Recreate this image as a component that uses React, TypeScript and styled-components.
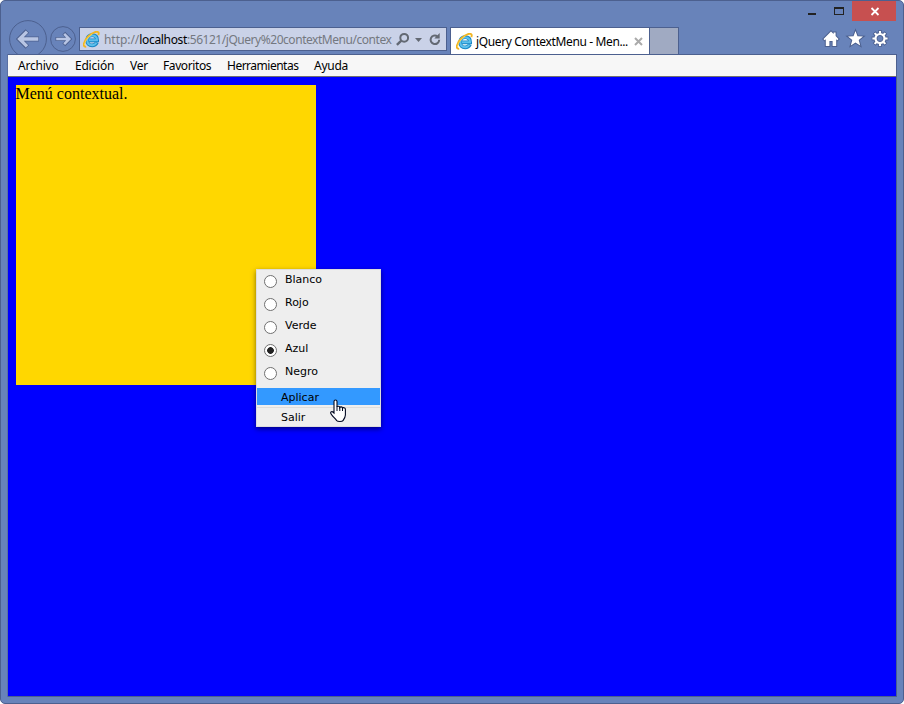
import React from 'react';
import styled, { createGlobalStyle } from 'styled-components';

const GlobalStyle = createGlobalStyle`
  * { box-sizing: border-box; }
  body { margin: 0; background: #fff; }
`;

const Window = styled.div`
  width: 904px;
  height: 704px;
  display: flex;
  flex-direction: column;
  padding: 0 7px 6px;
  border: 1px solid #4c608f;
  border-radius: 5px;
  background: #6883ba;
  overflow: hidden;
  font-family: 'Noto Sans', 'Open Sans', sans-serif;
  font-size: 12px;
  color: #000;
`;

const Caption = styled.div`
  height: 20px;
  flex: none;
  display: flex;
  justify-content: flex-end;
`;

const CaptionButton = styled.div<{ $w: number; $close?: boolean }>`
  width: ${(p) => p.$w}px;
  height: 20px;
  background: ${(p) => (p.$close ? '#c75050' : 'transparent')};
  svg { display: block; }
`;

const NavRow = styled.div`
  height: 33px;
  flex: none;
  display: flex;
  align-items: flex-start;
`;

const HistoryButtons = styled.svg`
  width: 71px;
  height: 33px;
  flex: none;
`;

const AddressBar = styled.div`
  width: 368px;
  height: 24px;
  margin-top: 6px;
  padding-left: 3px;
  display: flex;
  align-items: center;
  flex: none;
  border: 1px solid #4c608f;
  background: #cad2e8;
`;

const Url = styled.div`
  width: 288px;
  margin: 1px 0 0 4px;
  white-space: nowrap;
  color: #747880;
  letter-spacing: -0.05px;
  line-height: 20px;
`;

const Host = styled.span`
  color: #000;
  letter-spacing: -0.33px;
`;

const Path = styled.span`
  letter-spacing: -0.46px;
`;

const AddressIcons = styled.svg`
  width: 54px;
  height: 22px;
  flex: none;
`;

const Tab = styled.div`
  width: 200px;
  height: 27px;
  margin: 6px 0 0 3px;
  padding-left: 5px;
  display: flex;
  align-items: center;
  flex: none;
  border: 1px solid #4c608f;
  border-bottom: 0;
  background: #fff;
`;

const TabTitle = styled.div`
  width: 158px;
  margin: 1px 0 0 3px;
  white-space: nowrap;
  letter-spacing: -0.37px;
`;

const NewTab = styled.div`
  width: 29px;
  height: 27px;
  margin-top: 6px;
  border: 1px solid #4c608f;
  border-width: 1px 1px 0 0;
  background: #a0aac2;
`;

const Tools = styled.svg`
  width: 76px;
  height: 33px;
  margin-left: auto;
`;

const Client = styled.div`
  flex: 1;
  display: flex;
  flex-direction: column;
  border: 1px solid #4c608f;
  border-width: 1px 1px 1px 0;
  margin-right: -1px;
  box-shadow: -1px 0 0 #5a70a4;
`;

const MenuBar = styled.div`
  height: 22px;
  flex: none;
  display: flex;
  border-bottom: 1px solid #707070;
  padding-left: 10px;
  background: #f7f7f7;
  line-height: 22px;
`;

const MenuBarItem = styled.div<{ $w: number; $ls: number }>`
  width: ${(p) => p.$w}px;
  letter-spacing: ${(p) => p.$ls}px;
  white-space: nowrap;
`;

const Page = styled.div`
  position: relative;
  flex: 1;
  padding: 8px;
  background: #0000ff;
`;

const Target = styled.div`
  width: 300px;
  height: 300px;
  background: #ffd700;
  font: 16px/18px 'Liberation Serif', serif;
  text-indent: -0.5px;
`;

const ContextMenu = styled.div`
  position: absolute;
  left: 248px;
  top: 192px;
  width: 125px;
  height: 158px;
  border: 1px solid #ddd;
  background: #eee;
  box-shadow: 0 2px 5px rgba(0, 0, 0, 0.5);
  font: 11px/18px 'DejaVu Sans', sans-serif;
`;

const Option = styled.div`
  height: 23px;
  display: flex;
  padding-left: 7px;
  gap: 7px;
  line-height: 20px;
`;

const Radio = styled.div<{ $on?: boolean }>`
  width: 13px;
  height: 13px;
  margin-top: 5px;
  border: 1px solid #707070;
  border-radius: 50%;
  background: ${(p) => (p.$on ? 'radial-gradient(circle, #222 0 3px, #fff 3.7px)' : '#fff')};
`;

const Label = styled.span`
  margin-left: 1px;
  letter-spacing: -0.02px;
`;

const Command = styled.div<{ $active?: boolean }>`
  height: ${(p) => (p.$active ? 17 : 20)}px;
  margin-top: ${(p) => (p.$active ? 3 : 2)}px;
  padding-left: 24px;
  border-top: ${(p) => (p.$active ? '0' : '1px solid #ddd')};
  background: ${(p) => (p.$active ? '#3399ff' : 'transparent')};
  line-height: 19px;
`;

const Cursor = styled.svg`
  position: absolute;
  left: 72px;
  top: 129px;
  width: 18px;
  height: 24px;
`;

const IeLogo = () => (
  <svg width="17" height="17" viewBox="0 0 17 17" fill="none">
    <path d="M14 11.4C12.9 13.6 11.2 14.4 9.2 14.4 5.9 14.4 4 12.2 4 9.3S6.1 4.1 9.2 4.1s5 2 5 5.3H5.5" stroke="#1a86c4" strokeWidth="3.6" />
    <path d="M13.5 11.6c-.9 1.7-2.4 2.6-4.2 2.6-3 0-5-2-5-4.9s2-4.9 5-4.9 4.7 2 4.7 4.9H6" stroke="#5cc0ec" strokeWidth="2" />
    <path d="M3.2 15.6C-.9 16.5.6 10 5.4 5.3 9.6 1.1 15.2-.6 15.7 2c.1.7-.1 1.4-.4 2.1" stroke="#f2b522" strokeWidth="1.9" />
    <path d="M1.6 14C1.5 10.8 5 5.9 9.3 3" stroke="#ffdf60" strokeWidth=".7" />
  </svg>
);

const menus = [
  { text: 'Archivo', w: 57, ls: -0.22 },
  { text: 'Edición', w: 55, ls: -0.22 },
  { text: 'Ver', w: 33, ls: -0.3 },
  { text: 'Favoritos', w: 64, ls: -0.4 },
  { text: 'Herramientas', w: 87, ls: -0.5 },
  { text: 'Ayuda', w: 50, ls: -0.25 },
];

const colors = ['Blanco', 'Rojo', 'Verde', 'Azul', 'Negro'];

const teeth = [0, 45, 90, 135, 180, 225, 270, 315];

export default function App() {
  return (
    <>
      <GlobalStyle />
      <Window>
        <Caption>
          <CaptionButton $w={26}>
            <svg width="26" height="20"><path d="M8 12h8v2H8z" fill="#222" /></svg>
          </CaptionButton>
          <CaptionButton $w={26}>
            <svg width="26" height="20" shapeRendering="crispEdges">
              <path d="M8 6h10v8H8zM9 8v5h8V8z" fill="#222" fillRule="evenodd" />
            </svg>
          </CaptionButton>
          <CaptionButton $w={44} $close>
            <svg width="44" height="20"><path d="M19.5 7l7 7m0-7l-7 7" stroke="#fff" strokeWidth="1.8" /></svg>
          </CaptionButton>
        </Caption>
        <NavRow>
          <HistoryButtons viewBox="8 21 71 33" fill="none" overflow="visible">
            <circle cx="28" cy="39" r="18.4" stroke="#4c608f" />
            <circle cx="63" cy="39" r="12.4" stroke="#4c608f" />
            <path d="M39 39H20M27.3 31l-8 8 8 8" stroke="#4c608f" strokeWidth="5" />
            <path d="M38.3 39H20M27 31.6L19.6 39l7.4 7.4" stroke="#b8c5e4" strokeWidth="3.3" />
            <path d="M55.5 39H69M63.8 33.2l5.7 5.8-5.7 5.8" stroke="#4c608f" strokeWidth="4" />
            <path d="M56.2 39H69M64.2 33.8l5.1 5.2-5.1 5.2" stroke="#b8c5e4" strokeWidth="2.5" />
          </HistoryButtons>
          <AddressBar>
            <IeLogo />
            <Url>http://<Host>localhost</Host><Path>:56121/jQuery%20contextMenu/contex</Path></Url>
            <AddressIcons viewBox="392 28 54 22" fill="none">
              <circle cx="404.2" cy="37.8" r="3.9" stroke="#636973" strokeWidth="2" />
              <path d="M401.3 40.7l-4.4 4.2" stroke="#636973" strokeWidth="2.4" />
              <path d="M415 38h7l-3.5 4z" fill="#636973" />
              <path d="M437.3 36.2a4.3 4.3 0 1 0 1.9 3.6" stroke="#636973" strokeWidth="2" />
              <path d="M439.7 33v5.6h-5.4z" fill="#636973" />
            </AddressIcons>
          </AddressBar>
          <Tab>
            <IeLogo />
            <TabTitle>jQuery ContextMenu - Men...</TabTitle>
            <svg width="9" height="9"><path d="M1 1l7 7m0-7l-7 7" stroke="#aaa" strokeWidth="2" /></svg>
          </Tab>
          <NewTab />
          <Tools viewBox="820 21 76 33">
            <g fill="#fff" stroke="#4c608f" strokeWidth="2" paintOrder="stroke">
              <path d="M831 31.5l2.6 2.6v-1.6h2v3.6l2.9 3-1.1 1.1-1.2-.9V46h-3.6v-5h-3.2v5h-3.6v-6.7l-1.2.9-1.1-1.1z" />
              <path d="M855.5 31l2 5.2 5.5.3-4.3 3.5 1.5 5.5-4.7-3.1-4.7 3.1 1.5-5.5-4.3-3.5 5.5-.3z" />
            </g>
            <g fill="none" transform="translate(880 38.5)">
              <circle r="4.5" stroke="#4c608f" strokeWidth="4" />
              {teeth.map((a) => (
                <path key={a} d="M0-4.5v-3.8" transform={`rotate(${a})`} stroke="#4c608f" strokeWidth="3.8" />
              ))}
              <circle r="4.5" stroke="#fff" strokeWidth="2.2" />
              {teeth.map((a) => (
                <path key={a} d="M0-4.8v-2.8" transform={`rotate(${a})`} stroke="#fff" strokeWidth="2.1" />
              ))}
            </g>
          </Tools>
        </NavRow>
        <Client>
          <MenuBar>
            {menus.map((m) => (
              <MenuBarItem key={m.text} $w={m.w} $ls={m.ls}>{m.text}</MenuBarItem>
            ))}
          </MenuBar>
          <Page>
            <Target>Menú contextual.</Target>
            <ContextMenu>
              {colors.map((c) => (
                <Option key={c}>
                  <Radio $on={c === 'Azul'} />
                  <Label>{c}</Label>
                </Option>
              ))}
              <Command $active>Aplicar</Command>
              <Command>Salir</Command>
              <Cursor viewBox="0 0 18 24">
                <path
                  d="M5 14V2.5C5 .5 8 .5 8 2.5V8c.2-1.2 2.7-1 2.8.5.5-1 2.6-.8 2.7.6.6-.9 2.9-.5 2.9 1.2V16c0 2-1 3.6-2.4 5.6-.8 1.1-5.3 1.1-6.3 0C6.4 19.6 2 16 1.7 14.2 1.3 12.4 3 12 5 14z"
                  fill="#fff"
                  stroke="#000820"
                  strokeWidth="1.1"
                />
                <path d="M8 7.5V12m2.8-4v4m2.7-3.3V12" stroke="#000820" fill="none" />
              </Cursor>
            </ContextMenu>
          </Page>
        </Client>
      </Window>
    </>
  );
}
